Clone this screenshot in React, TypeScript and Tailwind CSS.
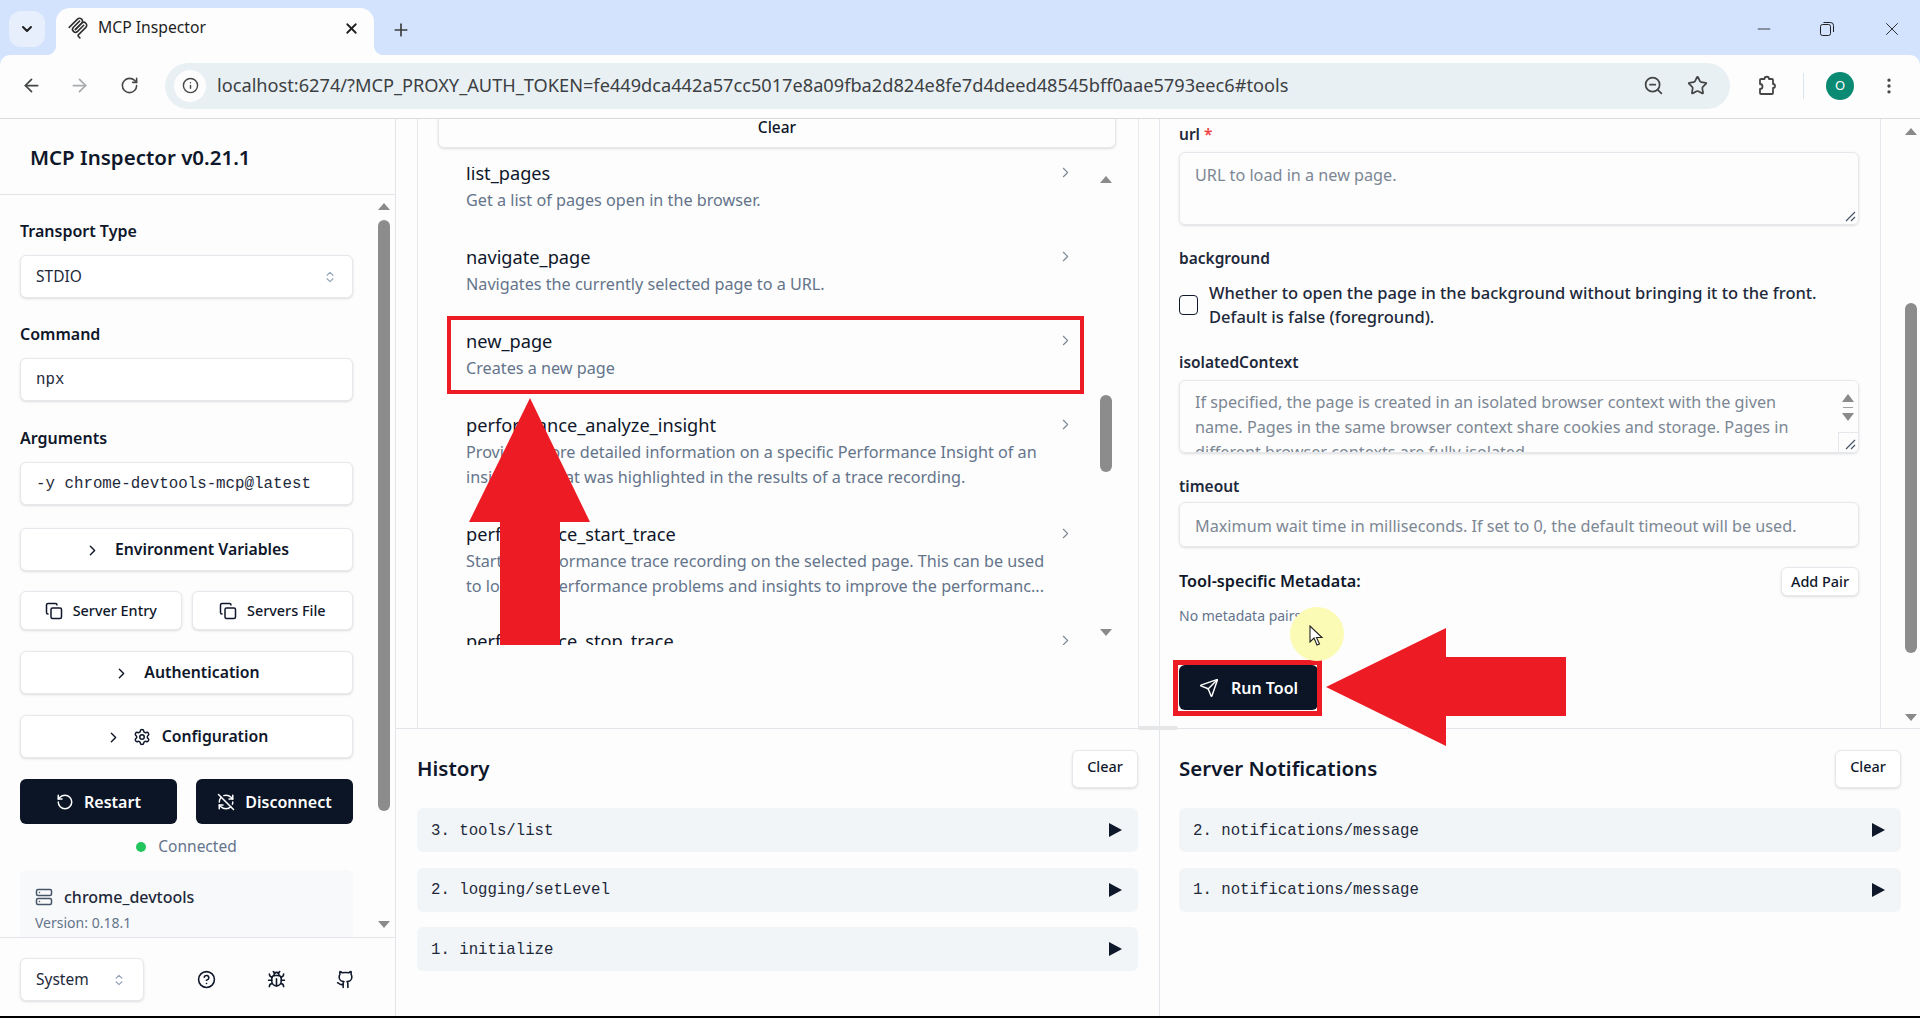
import {
  ArrowLeft,
  ArrowRight,
  Bug,
  ChevronDown,
  ChevronRight,
  ChevronsUpDown,
  CircleHelp,
  Copy,
  Github,
  Info,
  MoreVertical,
  Plus,
  RefreshCwOff,
  RotateCcw,
  RotateCw,
  Send,
  ServerIcon,
  Settings,
  Star,
  X,
  ZoomOut,
  Minus,
} from "lucide-react";

const sans = "font-['Noto_Sans',sans-serif]";

function ScrollColumn({ thumbTop, thumbHeight, top, bottom, right = 5 }: { thumbTop: number; thumbHeight: number; top: number; bottom: number; right?: number }) {
  return (
    <div className="absolute w-[12px]" style={{ top, height: bottom - top, right }}>
      <div className="mx-auto h-0 w-0 border-x-[6px] border-b-[7px] border-x-transparent border-b-[#8a8a8a]" />
      <div className="absolute left-0 w-[12px] rounded-full bg-[#8c8c8c]" style={{ top: thumbTop, height: thumbHeight }} />
      <div className="absolute bottom-0 h-0 w-0 border-x-[6px] border-t-[7px] border-x-transparent border-t-[#8a8a8a]" />
    </div>
  );
}

function SideField({ label, value, mono, select }: { label: string; value: string; mono?: boolean; select?: boolean }) {
  return (
    <div>
      <div className="h-[24px] text-[16px] font-semibold leading-[24px] text-[#0f172a]">{label}</div>
      <div className="mt-[12px] flex h-[43px] items-center justify-between rounded-md border border-[#e5e8ec] bg-white px-[15px] shadow-sm">
        <span className={mono ? "pt-[3px] font-['Liberation_Mono',monospace] text-[15.8px] text-[#1e293b]" : "pt-[1px] text-[15.5px] text-[#1e293b]"}>
          {value}
        </span>
        {select && <ChevronsUpDown size={14} className="text-[#94a3b8]" />}
      </div>
    </div>
  );
}

function SideButton({ children, className }: { children: React.ReactNode; className?: string }) {
  return (
    <div className={`flex items-center justify-center rounded-md border border-[#e5e8ec] bg-white pt-[1px] text-[15.8px] font-semibold text-[#0f172a] shadow-sm ${className ?? ""}`}>
      {children}
    </div>
  );
}

function DarkButton({ icon, label }: { icon: React.ReactNode; label: string }) {
  return (
    <div className="flex h-[45px] flex-1 items-center justify-center gap-[10px] rounded-md bg-[#0b1526] text-[16px] font-semibold text-white">
      {icon}
      {label}
    </div>
  );
}

function Sidebar() {
  return (
    <aside className="flex w-[396px] shrink-0 flex-col border-r border-[#e2e5e9]">
      <div className="flex h-[76px] shrink-0 items-center border-b border-[#e2e5e9] pl-[30px] pt-[2px] text-[20.5px] font-semibold text-[#0f172a]">
        MCP Inspector v0.21.1
      </div>
      <div className="relative min-h-0 flex-1 overflow-hidden">
        <ScrollColumn top={8} bottom={733} thumbTop={17} thumbHeight={591} />
        <div className="box-content flex w-[333px] flex-col pl-[20px] pt-[24px]">
          <SideField label="Transport Type" value="STDIO" select />
          <div className="mt-[24px]">
            <SideField label="Command" value="npx" mono />
          </div>
          <div className="mt-[25px]">
            <SideField label="Arguments" value="-y chrome-devtools-mcp@latest" mono />
          </div>
          <SideButton className="mt-[23px] h-[43px] gap-[14px]">
            <ChevronRight size={17} />
            Environment Variables
          </SideButton>
          <div className="mt-[20px] flex gap-[10px]">
            <SideButton className="h-[39px] flex-1 gap-[10px] !text-[14.4px] !font-medium">
              <Copy size={18} />
              Server Entry
            </SideButton>
            <SideButton className="h-[39px] flex-1 gap-[10px] !text-[14.4px] !font-medium">
              <Copy size={18} />
              Servers File
            </SideButton>
          </div>
          <SideButton className="mt-[21px] h-[43px] gap-[14px]">
            <ChevronRight size={17} />
            Authentication
          </SideButton>
          <SideButton className="mt-[21px] h-[43px] gap-[11px]">
            <ChevronRight size={17} />
            <Settings size={18} />
            Configuration
          </SideButton>
          <div className="mt-[21px] flex gap-[19px]">
            <DarkButton icon={<RotateCcw size={18} />} label="Restart" />
            <DarkButton icon={<RefreshCwOff size={18} />} label="Disconnect" />
          </div>
          <div className="mt-[12px] flex h-[22px] items-center justify-center gap-[12px] text-[15.5px] text-[#64748b]">
            <span className="h-[10px] w-[10px] rounded-full bg-[#22c55e]" />
            Connected
          </div>
          <div className="mt-[12px] h-[80px] rounded-md bg-[#f8f9fa] px-[15px] pt-[15px]">
            <div className="flex items-center gap-[11px] text-[16px] font-medium text-[#1e293b]">
              <ServerIcon size={18} className="text-[#475569]" />
              chrome_devtools
            </div>
            <div className="mt-[3px] text-[14px] text-[#64748b]">Version: 0.18.1</div>
          </div>
        </div>
      </div>
      <div className="flex h-[79px] shrink-0 items-start border-t border-[#e2e5e9] pl-[20px] pt-[20px]">
        <div className="flex h-[43px] w-[124px] items-center justify-between rounded-md border border-[#e5e8ec] bg-white pl-[15px] pr-[17px] text-[15.5px] text-[#1e293b] shadow-sm">
          System
          <ChevronsUpDown size={14} className="text-[#94a3b8]" />
        </div>
        <div className="ml-[53px] flex h-[43px] w-[158px] items-center justify-between text-[#0f172a]">
          <CircleHelp size={19} />
          <Bug size={19} />
          <Github size={19} />
        </div>
      </div>
    </aside>
  );
}

const tools = [
  { name: "list_pages", lines: ["Get a list of pages open in the browser."], h: 84 },
  { name: "navigate_page", lines: ["Navigates the currently selected page to a URL."], h: 84 },
  { name: "new_page", lines: ["Creates a new page"], h: 84 },
  {
    name: "performance_analyze_insight",
    lines: [
      "Provides more detailed information on a specific Performance Insight of an",
      "insight set that was highlighted in the results of a trace recording.",
    ],
    h: 109,
  },
  {
    name: "performance_start_trace",
    lines: [
      "Starts a performance trace recording on the selected page. This can be used",
      "to look for performance problems and insights to improve the performanc...",
    ],
    h: 107,
  },
  { name: "performance_stop_trace", lines: ["Stops the active performance trace recording."], h: 84 },
];

function ToolList() {
  return (
    <section className="relative flex w-[763px] shrink-0 flex-col pl-[21px]">
      <div className="flex h-full w-[722px] flex-col border-x border-[#e5e8ec] pl-[20px]">
        <div className="mr-[22px] flex h-[29px] shrink-0 items-start justify-center rounded-b-md border-x border-b border-[#e5e8ec] text-[15.5px] font-medium leading-[17px] text-[#0f172a] shadow-sm">
          Clear
        </div>
        <div className="relative mt-[19px] h-[478px] overflow-hidden">
          <div className="mt-[-7px] pl-[28px]">
            {tools.map((t) => (
              <div key={t.name} className="relative w-[596px]" style={{ height: t.h }}>
                <div className="h-[26px] text-[18.2px] leading-[26px] text-[#0f172a]">{t.name}</div>
                <div className="mt-[2px] text-[16.2px] leading-[25px] text-[#64748b]">
                  {t.lines.map((l) => (
                    <div key={l} className="whitespace-nowrap">{l}</div>
                  ))}
                </div>
                <ChevronRight size={17} strokeWidth={1.5} className="absolute right-[-12px] top-[4px] text-[#7b8794]" />
              </div>
            ))}
          </div>
          <div className="absolute left-[665px] top-[9px] h-[460px] w-[14px]">
            <ScrollColumn top={0} bottom={460} thumbTop={219} thumbHeight={77} />
          </div>
        </div>
      </div>
    </section>
  );
}

function FormLabel({ children, className }: { children: React.ReactNode; className?: string }) {
  return <div className={`h-[24px] text-[15.5px] font-semibold leading-[24px] text-[#1e293b] ${className ?? ""}`}>{children}</div>;
}

function Grip() {
  return (
    <svg width="12" height="12" viewBox="0 0 12 12" className="absolute bottom-[2px] right-[2px] text-[#475569]">
      <path d="M2 11 L11 2 M7 11 L11 7" stroke="currentColor" strokeWidth="1.2" />
    </svg>
  );
}

function ToolForm() {
  return (
    <section className="relative min-w-0 flex-1 overflow-hidden">
      <ScrollColumn top={9} bottom={602} thumbTop={175} thumbHeight={350} right={3} />
      <div className="h-full w-[722px] border-x border-[#e5e8ec] pl-[19px]">
        <div className="w-[680px] pt-[3px]">
          <FormLabel>
            url <span className="text-[#ef4444]">*</span>
          </FormLabel>
          <div className="relative mt-[6px] h-[73px] rounded-md border border-[#e5e8ec] px-[15px] pt-[10px] text-[16.2px] leading-[25px] text-[#7c8794] shadow-sm">
            URL to load in a new page.
            <Grip />
          </div>
          <FormLabel className="mt-[21px]">background</FormLabel>
          <div className="mt-[11px] flex items-center gap-[11px]">
            <div className="h-[20px] w-[19px] shrink-0 rounded-[4px] border border-[#0f172a]" />
            <div className="whitespace-nowrap text-[16.5px] font-medium leading-[24px] text-[#1e293b]">
              Whether to open the page in the background without bringing it to the front.
              <br />
              Default is false (foreground).
            </div>
          </div>
          <FormLabel className="mt-[21px]">isolatedContext</FormLabel>
          <div className="relative mt-[6px] h-[73px] overflow-hidden rounded-md border border-[#e5e8ec] px-[15px] pt-[9px] text-[16.2px] leading-[25px] text-[#7c8794] shadow-sm">
            <div className="whitespace-nowrap">If specified, the page is created in an isolated browser context with the given</div>
            <div className="whitespace-nowrap">name. Pages in the same browser context share cookies and storage. Pages in</div>
            <div className="whitespace-nowrap">different browser contexts are fully isolated.</div>
            <div className="absolute right-0 top-0 flex h-[52px] w-[20px] flex-col items-center justify-center gap-[5px] bg-[#fdfdfd]">
              <div className="h-0 w-0 border-x-[6px] border-b-[8px] border-x-transparent border-b-[#8a8a8a]" />
              <div className="h-px w-[10px] bg-[#9aa0a6]" />
              <div className="h-0 w-0 border-x-[6px] border-t-[8px] border-x-transparent border-t-[#8a8a8a]" />
            </div>
            <div className="absolute bottom-0 right-0 h-[20px] w-[20px] border-l border-t border-[#e5e8ec] bg-[#fdfdfd]">
              <Grip />
            </div>
          </div>
          <FormLabel className="mt-[21px]">timeout</FormLabel>
          <div className="mt-[4px] flex h-[45px] items-center rounded-md border border-[#e5e8ec] px-[15px] pt-[3px] text-[16.2px] text-[#7c8794] shadow-sm">
            Maximum wait time in milliseconds. If set to 0, the default timeout will be used.
          </div>
          <div className="mt-[20px] flex items-center justify-between">
            <div className="text-[16.2px] font-semibold text-[#0f172a]">Tool-specific Metadata:</div>
            <div className="flex h-[29px] w-[78px] items-center justify-center rounded-md border border-[#e5e8ec] bg-white text-[14.4px] font-medium text-[#0f172a] shadow-sm">
              Add Pair
            </div>
          </div>
          <div className="mt-[9px] text-[14px] leading-[22px] text-[#64748b]">No metadata pairs.</div>
          <div className="mt-[38px] flex h-[45px] w-[139px] items-center justify-center gap-[12px] rounded-md bg-[#0b1526] text-[16px] font-semibold text-white">
            <Send size={20} strokeWidth={1.75} />
            Run Tool
          </div>
        </div>
      </div>
    </section>
  );
}

function LogRow({ label }: { label: string }) {
  return (
    <div className="flex h-[44px] items-center justify-between rounded-md bg-[#f1f5f7] pl-[14px] pr-[16px] font-['Liberation_Mono',monospace] text-[15.7px] text-[#1e293b]">
      <span className="pt-[3px]">{label}</span>
      <span className="h-0 w-0 border-y-[7px] border-l-[13px] border-y-transparent border-l-[#0f172a]" />
    </div>
  );
}

function LogPanel({ title, rows, className }: { title: string; rows: string[]; className: string }) {
  return (
    <section className={className}>
      <div className="flex h-[39px] items-center justify-between">
        <h2 className="text-[20.5px] font-semibold text-[#0f172a]">{title}</h2>
        <div className="flex h-[38px] w-[66px] items-center justify-center rounded-md border border-[#e5e8ec] bg-white pb-[4px] text-[14.4px] font-medium text-[#0f172a] shadow-sm">
          Clear
        </div>
      </div>
      <div className="mt-[20px] flex flex-col gap-[15.5px]">
        {rows.map((r) => (
          <LogRow key={r} label={r} />
        ))}
      </div>
    </section>
  );
}

function McpLogo() {
  return (
    <svg width="22" height="24" viewBox="0 0 180 180" fill="none" stroke="#2f2f2f" strokeWidth="13" strokeLinecap="round">
      <path d="M18 84.8528L85.8822 16.9706C95.2548 7.59798 110.451 7.59798 119.823 16.9706C129.196 26.3431 129.196 41.5391 119.823 50.9117L68.5581 102.177" />
      <path d="M69.2652 101.47L119.823 50.9117C129.196 41.5391 144.392 41.5391 153.765 50.9117L154.118 51.2652C163.491 60.6378 163.491 75.8338 154.118 85.2063L92.7248 146.6C89.6006 149.724 89.6006 154.789 92.7248 157.913L105.331 170.52" />
      <path d="M102.853 33.9411L52.6482 84.1457C43.2756 93.5183 43.2756 108.714 52.6482 118.087C62.0208 127.459 77.2167 127.459 86.5893 118.087L136.794 67.8822" />
    </svg>
  );
}

function BrowserChrome() {
  return (
    <header className="shrink-0 bg-[#d3e3fd]">
      <div className="flex h-[55px] items-end">
        <div className="mb-[8px] ml-[9px] flex h-[36px] w-[36px] items-center justify-center rounded-[12px] bg-[#e7effc]">
          <ChevronDown size={16} strokeWidth={3} className="text-[#1f1f1f]" />
        </div>
        <div className="relative ml-[11px] flex h-[47px] w-[318px] items-center rounded-t-[14px] bg-[#fdfdfd] pb-[7px] pl-[11px] pr-[14px]">
          <span className="absolute bottom-0 left-[-10px] h-[10px] w-[10px] bg-[radial-gradient(circle_at_0_0,#d3e3fd_10px,#fdfdfd_10.5px)]" />
          <span className="absolute bottom-0 right-[-10px] h-[10px] w-[10px] bg-[radial-gradient(circle_at_100%_0,#d3e3fd_10px,#fdfdfd_10.5px)]" />
          <McpLogo />
          <span className="ml-[9px] flex-1 text-[15.7px] text-[#1f1f1f]">MCP Inspector</span>
          <X size={17} strokeWidth={2.5} className="text-[#1f1f1f]" />
        </div>
        <Plus size={20} strokeWidth={2} className="mb-[15px] ml-[17px] text-[#3b3b3b]" />
        <div className="mb-[15px] ml-auto flex items-center text-[#1f1f1f]">
          <Minus size={20} strokeWidth={1} />
          <svg width="18" height="18" viewBox="0 0 18 18" fill="none" stroke="currentColor" strokeWidth="1" className="ml-[44px]">
            <rect x="2.5" y="4.5" width="10" height="11" rx="2" />
            <path d="M5.5 2.5 H12.5 a3 3 0 0 1 3 3 V12" />
          </svg>
          <X size={22} strokeWidth={1} className="ml-[45px] mr-[17px]" />
        </div>
      </div>
      <div className="flex h-[64px] items-center rounded-t-[10px] border-b border-[#dadce0] bg-[#fdfdfd] pb-[2px]">
        <ArrowLeft size={21} className="ml-[21px] text-[#444746]" />
        <ArrowRight size={21} className="ml-[27px] text-[#a8abae]" />
        <RotateCw size={19} className="ml-[30px] text-[#444746]" />
        <div className="ml-[26px] flex h-[46px] w-[1565px] items-center rounded-full bg-[#e9f0f4] pl-[9px] pr-[22px]">
          <div className="flex h-[32px] w-[32px] items-center justify-center rounded-full bg-[#fdfdfd]">
            <Info size={17} className="text-[#444746]" />
          </div>
          <span className="ml-[11px] flex-1 whitespace-nowrap text-[18.2px] text-[#3c4043]">
            localhost:6274/?MCP_PROXY_AUTH_TOKEN=fe449dca442a57cc5017e8a09fba2d824e8fe7d4deed48545bff0aae5793eec6#tools
          </span>
          <ZoomOut size={21} className="text-[#444746]" />
          <Star size={21} className="ml-[23px] text-[#444746]" />
        </div>
        <svg width="24" height="24" viewBox="0 0 24 24" fill="none" stroke="#444746" strokeWidth="1.8" strokeLinejoin="round" className="ml-[25px]">
          <path d="M6 5 H9.5 A2.2 2.2 0 0 1 14 5 H17 a1 1 0 0 1 1 1 V10 A2 2 0 0 1 18 14 V19 a1 1 0 0 1 -1 1 H6 a1 1 0 0 1 -1 -1 V15 A2.5 2.5 0 0 0 5 10 V6 a1 1 0 0 1 1 -1 Z" />
        </svg>
        <div className="ml-[24px] h-[26px] w-px bg-[#dbe4f0]" />
        <div className="ml-[22px] flex h-[28px] w-[28px] items-center justify-center rounded-full bg-[#0b8a73] text-[13px] text-white">
          O
        </div>
        <MoreVertical size={20} className="ml-[25px] text-[#444746]" />
      </div>
    </header>
  );
}

// annotation layer painted on top of the captured page
function Annotations() {
  return (
    <>
      <div className="absolute left-[447px] top-[316px] h-[78px] w-[637px] border-[4px] border-[#ed1c24]" />
      <div className="absolute left-[1173px] top-[660px] h-[56px] w-[149px] border-[5px] border-[#ed1c24]" />
      <div className="absolute left-[1290px] top-[607px] h-[54px] w-[54px] rounded-full bg-[#fbfbb5]" />
      <svg className="absolute left-[1308px] top-[625px]" width="16" height="22" viewBox="0 0 16 22">
        <path d="M2 1 L2 17 L6 13 L9 20 L11.5 19 L8.5 12.5 L14 12.5 Z" fill="#fff" stroke="#222" strokeWidth="1.1" />
      </svg>
      <svg className="absolute left-[469px] top-[398px]" width="122" height="248" viewBox="0 0 122 248">
        <path d="M61 0 L121 124 L91 124 L91 247 L31 247 L31 124 L0 124 Z" fill="#ed1c24" />
      </svg>
      <svg className="absolute left-[1326px] top-[628px]" width="241" height="119" viewBox="0 0 241 119">
        <path d="M0 59 L120 0 L120 29 L240 29 L240 88 L120 88 L120 118 Z" fill="#ed1c24" />
      </svg>
      <div className="absolute left-[1138px] top-[726px] h-[4px] w-[40px] rounded-sm bg-[#e4e6e8]" />
    </>
  );
}

export default function App() {
  return (
    <div className={`relative flex h-[1018px] w-[1920px] flex-col overflow-hidden bg-[#fdfdfd] ${sans}`}>
      <BrowserChrome />
      <main className="flex min-h-0 flex-1">
        <Sidebar />
        <div className="flex min-w-0 flex-1 flex-col">
          <div className="flex h-[610px] shrink-0 border-b border-[#e2e5e9]">
            <ToolList />
            <ToolForm />
          </div>
          <div className="flex min-h-0 flex-1">
            <LogPanel
              title="History"
              rows={["3. tools/list", "2. logging/setLevel", "1. initialize"]}
              className="w-[763px] shrink-0 pl-[21px] pr-[21px] pt-[20px]"
            />
            <LogPanel
              title="Server Notifications"
              rows={["2. notifications/message", "1. notifications/message"]}
              className="min-w-0 flex-1 border-l border-[#e2e5e9] pl-[19px] pr-[19px] pt-[20px]"
            />
          </div>
        </div>
      </main>
      <div className="h-[2px] shrink-0 bg-black" />
      <Annotations />
    </div>
  );
}
